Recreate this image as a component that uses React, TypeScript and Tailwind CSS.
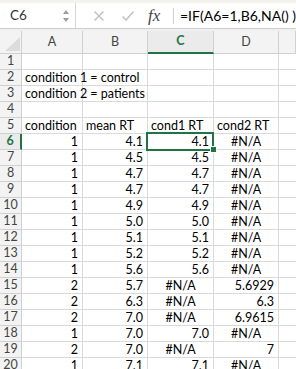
import React from "react";

const font = { fontFamily: "Lato, 'Open Sans', sans-serif" };

type Row = [string, string, string, string, string];

const rows: Row[] = [
  ["1", "", "", "", ""],
  ["2", "condition 1 = control", "", "", ""],
  ["3", "condition 2 = patients", "", "", ""],
  ["4", "", "", "", ""],
  ["5", "condition", "mean RT", "cond1 RT", "cond2 RT"],
  ["6", "1", "4.1", "4.1", "#N/A"],
  ["7", "1", "4.5", "4.5", "#N/A"],
  ["8", "1", "4.7", "4.7", "#N/A"],
  ["9", "1", "4.7", "4.7", "#N/A"],
  ["10", "1", "4.9", "4.9", "#N/A"],
  ["11", "1", "5.0", "5.0", "#N/A"],
  ["12", "1", "5.1", "5.1", "#N/A"],
  ["13", "1", "5.2", "5.2", "#N/A"],
  ["14", "1", "5.6", "5.6", "#N/A"],
  ["15", "2", "5.7", "#N/A", "5.6929"],
  ["16", "2", "6.3", "#N/A", "6.3"],
  ["17", "2", "7.0", "#N/A", "6.9615"],
  ["18", "1", "7.0", "7.0", "#N/A"],
  ["19", "2", "7.0", "#N/A", "7"],
  ["20", "1", "7.1", "7.1", "#N/A"],
];

function Cell({ v, row, col }: { v: string; row: number; col: number }) {
  const isText = row <= 5;
  const isNA = v === "#N/A";
  const align = isText ? "justify-start pl-[3px]" : isNA ? "justify-center" : "justify-end pr-[4px]";
  const selected = row === 6 && col === 3;
  const overflowText = isText && col === 1 && row >= 2 && row <= 3;
  if (selected) {
    return (
      <div className="relative z-20 h-4 flex items-center justify-end pr-[4px] border-r border-b border-[#dadada] bg-white text-[12.5px] text-black whitespace-nowrap">
        <span className="leading-4">{v}</span>
        <div className="absolute left-[-2px] top-[-2px] w-[68px] h-[19px] border-2 border-solid border-[#217346]" />
        <div className="absolute left-[62px] top-[12px] w-[7px] h-[7px] bg-[#217346] border border-solid border-white" />
      </div>
    );
  }
  const overflowClass = overflowText ? "z-10" : "overflow-hidden";
  return (
    <div
      className={`relative h-4 flex items-center border-r border-b border-[#dadada] bg-white text-[12.5px] text-black whitespace-nowrap ${align} ${overflowClass}`}
    >
      <span className={overflowText ? "absolute left-[3px] top-0 leading-4" : "leading-4"}>{v}</span>
    </div>
  );
}

export default function App() {
  return (
    <div className="w-[296px] h-[369px] overflow-hidden bg-white" style={font}>
      {/* top strip */}
      <div className="h-[3px] bg-[#f4f2ec]" />
      {/* formula bar */}
      <div className="h-[25px] flex items-center bg-white">
        <div className="w-[84px] h-full flex items-center justify-between pl-[10px] pr-[5px] border-r border-[#d6d6d6]">
          <span className="text-[13.5px] text-[#333]">C6</span>
          <svg width="8" height="16" viewBox="0 0 8 16">
            <path d="M1 6 L4 2 L7 6 Z" fill="#9b9b9b" />
            <path d="M1 10 L4 14 L7 10 Z" fill="#9b9b9b" />
          </svg>
        </div>
        <div className="w-[97px] h-full flex items-center shrink-0">
          <svg className="ml-[17px] shrink-0" width="12" height="12" viewBox="0 0 12 12">
            <path d="M1.5 1.5 L10.5 10.5 M10.5 1.5 L1.5 10.5" stroke="#c4c4c4" strokeWidth="1.6" />
          </svg>
          <svg className="ml-[16px] shrink-0" width="14" height="12" viewBox="0 0 14 12">
            <path d="M1.5 6.5 L5 10 L12.5 1.5" stroke="#c4c4c4" strokeWidth="1.6" fill="none" />
          </svg>
          <span
            className="ml-[13px] text-[17px] italic text-[#444] leading-none"
            style={{ fontFamily: "'Liberation Serif', serif" }}
          >
            fx
          </span>
        </div>
        <div className="w-px h-[16px] bg-[#cfcfcf] shrink-0" />
        <span className="ml-[6px] text-[14px] text-black whitespace-nowrap">=IF(A6=1,B6,NA() )</span>
      </div>
      {/* separator */}
      <div className="h-px bg-[#cdcdcd]" />
      <div className="h-[2px] bg-[#f0f0f0]" />
      {/* grid */}
      <div className="grid grid-cols-[22px_61px_65px_66px_65px_1fr]">
        {/* header row */}
        <div className="h-[23px] relative border-r border-b border-[#d0d0d0] bg-[#f3f3f3]">
          <svg className="absolute left-[5px] top-[6px]" width="15" height="14" viewBox="0 0 15 14">
            <path d="M15 0 L15 14 L0 14 Z" fill="#dcdcdc" />
          </svg>
        </div>
        {["A", "B", "C", "D", ""].map((c) => (
          <div
            key={c || "E"}
            className={`h-[23px] flex items-center justify-center border-r border-b text-[12.5px] ${
              c === "C"
                ? "bg-[#ebebeb] border-b-2 border-b-[#217346] border-r-[#d0d0d0] text-[#217346] font-bold"
                : "bg-[#f3f3f3] border-[#d0d0d0] text-[#444]"
            }`}
          >
            {c}
          </div>
        ))}
        {rows.map((r, i) => {
          const rowNum = i + 1;
          const sel = rowNum === 6;
          return (
            <React.Fragment key={rowNum}>
              <div
                className={`h-4 flex items-center justify-center border-b border-[#d0d0d0] text-[12.5px] ${
                  sel
                    ? "bg-[#ebebeb] border-r-2 border-r-[#217346] text-[#217346] font-bold"
                    : "bg-[#f3f3f3] border-r border-r-[#d0d0d0] text-[#444]"
                }`}
              >
                {r[0]}
              </div>
              <Cell v={r[1]} row={rowNum} col={1} />
              <Cell v={r[2]} row={rowNum} col={2} />
              <Cell v={r[3]} row={rowNum} col={3} />
              <Cell v={r[4]} row={rowNum} col={4} />
              <div className="h-4 border-b border-[#dadada] bg-white" />
            </React.Fragment>
          );
        })}
      </div>
    </div>
  );
}
